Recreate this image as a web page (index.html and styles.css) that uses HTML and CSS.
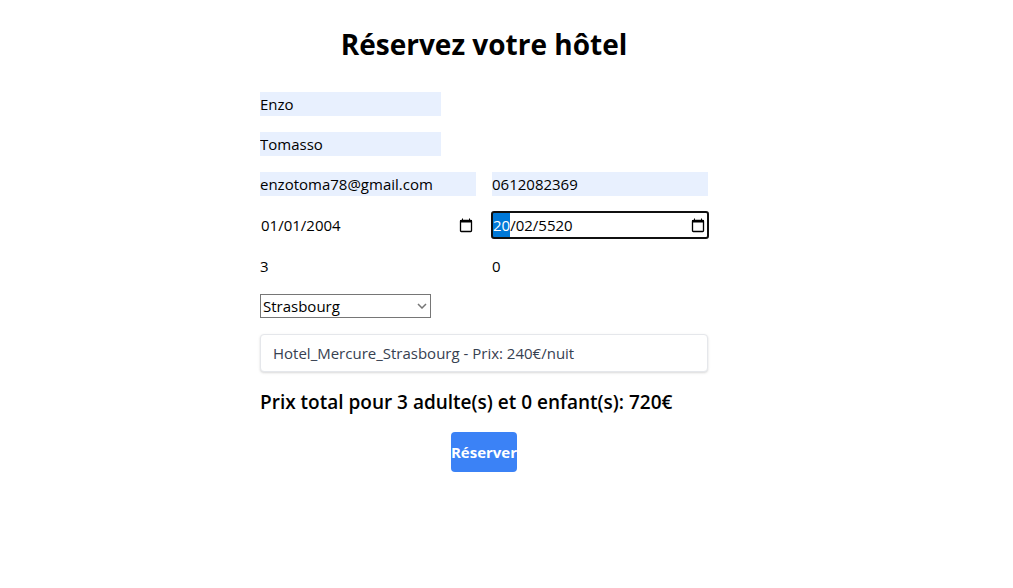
FILE: index.html
```html
<!DOCTYPE html>
<html lang="fr">
<head>
<meta charset="utf-8">
<meta name="viewport" content="width=device-width, initial-scale=1">
<title>Réservez votre hôtel</title>
<link rel="stylesheet" href="styles.css">
</head>
<body>
<main class="page">
  <h1 class="title">Réservez votre hôtel</h1>
  <form class="form">
    <input class="field field-filled field-short" type="text" aria-label="Prénom" value="Enzo">
    <input class="field field-filled field-short" type="text" aria-label="Nom" value="Tomasso">
    <div class="row">
      <input class="field field-filled" type="email" aria-label="E-mail" value="enzotoma78@gmail.com">
      <input class="field field-filled" type="tel" aria-label="Téléphone" value="0612082369">
    </div>
    <div class="row">
      <div class="date">
        <input class="field date-input" type="text" aria-label="Date d'arrivée" value="01/01/2004">
        <button class="date-button" type="button" aria-label="Choisir la date d'arrivée">
          <svg class="date-icon" viewBox="0 0 14 15"><rect x="1.500" y="2.500" width="11" height="11" rx=".8" fill="none" stroke="#000" stroke-width="1.300"/><path d="M1 2h12v2.500H1zM3 .5h1V2H3zM10 .5h1V2h-1z"/></svg>
        </button>
      </div>
      <div class="date date-active">
        <input class="field date-input" id="depart" type="text" aria-label="Date de départ" value="20/02/5520">
        <button class="date-button" type="button" aria-label="Choisir la date de départ">
          <svg class="date-icon" viewBox="0 0 14 15"><rect x="1.500" y="2.500" width="11" height="11" rx=".8" fill="none" stroke="#000" stroke-width="1.300"/><path d="M1 2h12v2.500H1zM3 .5h1V2H3zM10 .5h1V2h-1z"/></svg>
        </button>
      </div>
    </div>
    <div class="row">
      <input class="field" type="number" aria-label="Adultes" value="3">
      <input class="field" type="number" aria-label="Enfants" value="0">
    </div>
    <div class="city">
      <select class="city-select" aria-label="Ville"><option>Strasbourg</option></select>
      <svg class="city-arrow" viewBox="0 0 10 6"><path d="M1 1l4 4 4-4" fill="none" stroke="#767676" stroke-width="1.500"/></svg>
    </div>
    <input class="hotel" type="text" aria-label="Hôtel" value="Hotel_Mercure_Strasbourg - Prix: 240€/nuit" readonly>
    <p class="total">Prix total pour 3 adulte(s) et 0 enfant(s): 720€</p>
    <button class="submit" type="submit">Réserver</button>
  </form>
</main>
<script src="script.js"></script>
</body>
</html>
```
FILE: styles.css
```css
* { box-sizing: border-box; }
body {
  margin: 0;
  background: #fff;
  color: #000;
  font: 15px/24px "Segoe UI", "Open Sans", "Noto Sans", sans-serif;
}
input, select, button { font: inherit; color: inherit; margin: 0; }
.page { padding: 26px 45px 24px 0; }
.title {
  margin: 0 0 30px;
  font-size: 28px;
  line-height: 36px;
  font-weight: 700;
  text-align: center;
}
.form {
  display: flex;
  flex-direction: column;
  align-items: flex-start;
  gap: 16px;
  max-width: 448px;
  margin: 0 auto;
}
.row {
  display: grid;
  grid-template-columns: 1fr 1fr;
  gap: 16px;
  width: 100%;
}
.field {
  width: 100%;
  min-width: 0;
  height: 24px;
  padding: 0;
  border: 0;
  outline: 0;
  background: transparent;
  appearance: textfield;
}
.field::-webkit-inner-spin-button { appearance: none; }
.field-filled { background: #e8f0fe; }
.field-short { width: 181px; }
.date {
  display: flex;
  align-items: center;
  height: 26px;
  padding: 1px;
}
.date-active { border-radius: 2px; outline: 2px solid #101010; outline-offset: -1px; }
.date-input::selection { background: #0078d7; color: #fff; }
.date-button {
  flex: none;
  display: flex;
  padding: 0 2px 0 0;
  border: 0;
  background: none;
}
.date-icon { width: 14px; height: 15px; }
.city { display: grid; align-items: center; width: 171px; }
.city-select {
  grid-area: 1 / 1;
  height: 24px;
  padding: 0 2px;
  border: 1px solid #767676;
  border-radius: 0;
  background: #fff;
  appearance: none;
  line-height: 22px;
}
.city-arrow {
  grid-area: 1 / 1;
  justify-self: end;
  width: 10px;
  height: 6px;
  margin-right: 4px;
  pointer-events: none;
}
.hotel {
  width: 100%;
  height: 38px;
  padding: 0 12px;
  border: 1px solid #e5e7eb;
  border-radius: 4px;
  background: #fff;
  box-shadow: 0 1px 3px rgba(0, 0, 0, .1), 0 1px 2px rgba(0, 0, 0, .06);
  color: #374151;
}
.total { margin: 0; font-size: 19px; line-height: 28px; font-weight: 600; }
.submit {
  align-self: center;
  height: 40px;
  padding: 0;
  border: 0;
  border-radius: 4px;
  background: #3b82f6;
  color: #fff;
  font-weight: 700;
}
```
FILE: script.js
```js
const depart = document.getElementById("depart");
depart.focus();
depart.setSelectionRange(0, 2);
```
